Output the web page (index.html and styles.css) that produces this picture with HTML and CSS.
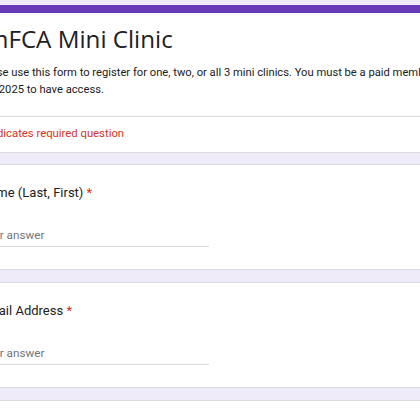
FILE: index.html
```html
<!DOCTYPE html>
<html>
<head>
<meta charset="utf-8">
<link rel="stylesheet" href="styles.css">
</head>
<body>
<div class="form">
  <div class="card header">
    <div class="bar"></div>
    <div class="head-body">
      <h1 class="title">mFCA Mini Clinic</h1>
      <p class="desc">Please use this form to register for one, two, or all 3 mini clinics. You must be a paid member of NFCA for the<br>year 2025 to have access.</p>
    </div>
    <div class="req">* Indicates required question</div>
  </div>
  <div class="card question">
    <div class="q-title">Name (Last, First) <span class="star">*</span></div>
    <div class="answer">Your answer</div>
  </div>
  <div class="card question">
    <div class="q-title">Email Address <span class="star">*</span></div>
    <div class="answer">Your answer</div>
  </div>
  <div class="card question"></div>
</div>
</body>
</html>
```
FILE: styles.css
```css
html, body {
  margin: 0;
  padding: 0;
  background: #f0ebf8;
  overflow: hidden;
  height: 420px;
}
.form {
  margin-left: -45px;
  width: 540px;
  padding-top: 5px;
  display: flex;
  flex-direction: column;
  gap: 11px;
  font-family: Roboto, "Noto Sans", sans-serif;
  color: #202124;
}
.card {
  background: #fff;
  border: 1px solid #dadce0;
  border-radius: 8px;
  overflow: hidden;
}
.header {
  border-top: none;
}
.bar {
  height: 8px;
  background: #673ab7;
}
.head-body {
  padding: 11px 24px 18px;
}
.title {
  margin: 0 0 0 6px;
  font-family: "Open Sans", Roboto, sans-serif;
  font-weight: 400;
  font-size: 24.2px;
  line-height: 30px;
}
.desc {
  margin: 10px 0 0 -5px;
  font-size: 11.2px;
  line-height: 17px;
  white-space: nowrap;
}
.req {
  border-top: 1px solid #dadce0;
  padding: 10px 24px 11px;
  font-size: 11.3px;
  line-height: 14px;
  color: #d93025;
}
.question {
  height: 106px;
  padding: 19px 24px 0;
  box-sizing: border-box;
}
.question + .question {
  margin-top: 1px;
}
.q-title {
  font-size: 13px;
  line-height: 18px;
}
.star {
  color: #d93025;
}
.answer {
  margin-top: 26px;
  width: 229px;
  font-size: 11.7px;
  line-height: 15px;
  padding-bottom: 3px;
  color: #70757a;
  border-bottom: 1px solid #dadce0;
}
```
